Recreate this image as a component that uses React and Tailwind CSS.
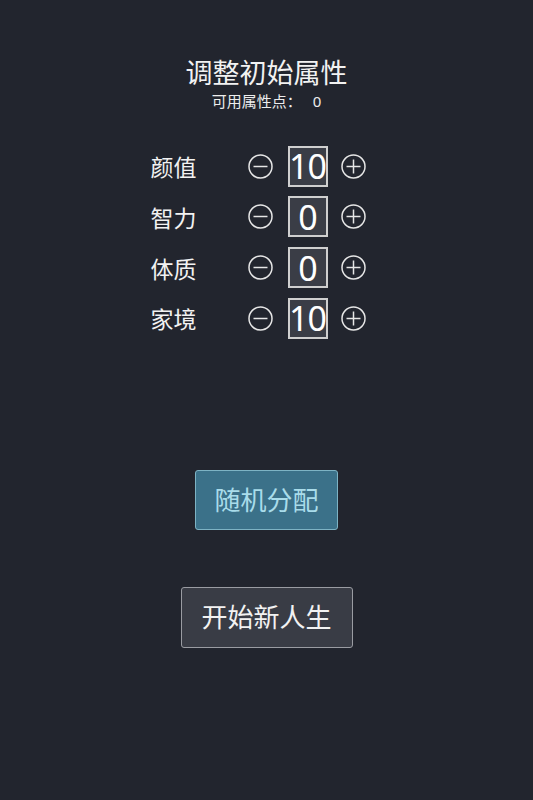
import { useState } from "react"

const CircleButton = ({ plus, onClick }) => (
  <button onClick={onClick} className="w-[25px] h-[25px] flex items-center justify-center">
    <svg width="25" height="25" viewBox="0 0 25 25" fill="none" stroke="#e6e6e6" strokeWidth="1.5">
      <circle cx="12.5" cy="12.5" r="11.5" />
      <line x1="5.5" y1="12.5" x2="19.5" y2="12.5" />
      {plus && <line x1="12.5" y1="5.5" x2="12.5" y2="19.5" />}
    </svg>
  </button>
)

const AttrRow = ({ label, value, onDec, onInc }) => (
  <div className="h-[50.67px] flex items-center">
    <div className="w-[97px] text-[23px] leading-none text-[#f2f2f2] pt-[3px]">{label}</div>
    <CircleButton onClick={onDec} />
    <div className="ml-[15px] w-[40px] h-[41px] border-2 border-[#cfcfcf] bg-[#3a3d46] flex items-center justify-center text-[34px] leading-none text-white tracking-[-1px]">
      {value}
    </div>
    <div className="ml-[13px]">
      <CircleButton plus onClick={onInc} />
    </div>
  </div>
)

export default function App() {
  const [attrs, setAttrs] = useState([
    { label: "颜值", value: 10 },
    { label: "智力", value: 0 },
    { label: "体质", value: 0 },
    { label: "家境", value: 10 },
  ])

  const change = (i, d) =>
    setAttrs((prev) => prev.map((a, j) => (j === i ? { ...a, value: Math.max(0, a.value + d) } : a)))

  return (
    <div className="min-h-[800px] bg-[#22252e] font-['Noto_Sans','Noto_Sans_CJK_SC',sans-serif] flex flex-col items-center pt-[57px]">
      <h1 className="text-[27px] leading-[32px] text-[#f2f2f2]">调整初始属性</h1>
      <div className="mt-[3px] text-[15px] leading-[18px] text-[#ededed] flex">
        <span>可用属性点：</span>
        <span className="ml-[11px]">0</span>
      </div>

      {/* attribute rows */}
      <div className="mt-[31px] w-[216px] mr-[16px]">
        {attrs.map((a, i) => (
          <AttrRow
            key={a.label}
            label={a.label}
            value={a.value}
            onDec={() => change(i, -1)}
            onInc={() => change(i, 1)}
          />
        ))}
      </div>

      <button className="mt-[126px] h-[60px] w-[143px] rounded-[3px] border border-[#7db3c4] bg-[#3b7189] text-[26px] leading-none text-[#a9dcea]">
        随机分配
      </button>

      <button className="mt-[57px] h-[61px] w-[172px] rounded-[3px] border border-[#9a9ca2] bg-[#393c45] text-[26px] leading-none text-[#f2f2f2]">
        开始新人生
      </button>
    </div>
  )
}
